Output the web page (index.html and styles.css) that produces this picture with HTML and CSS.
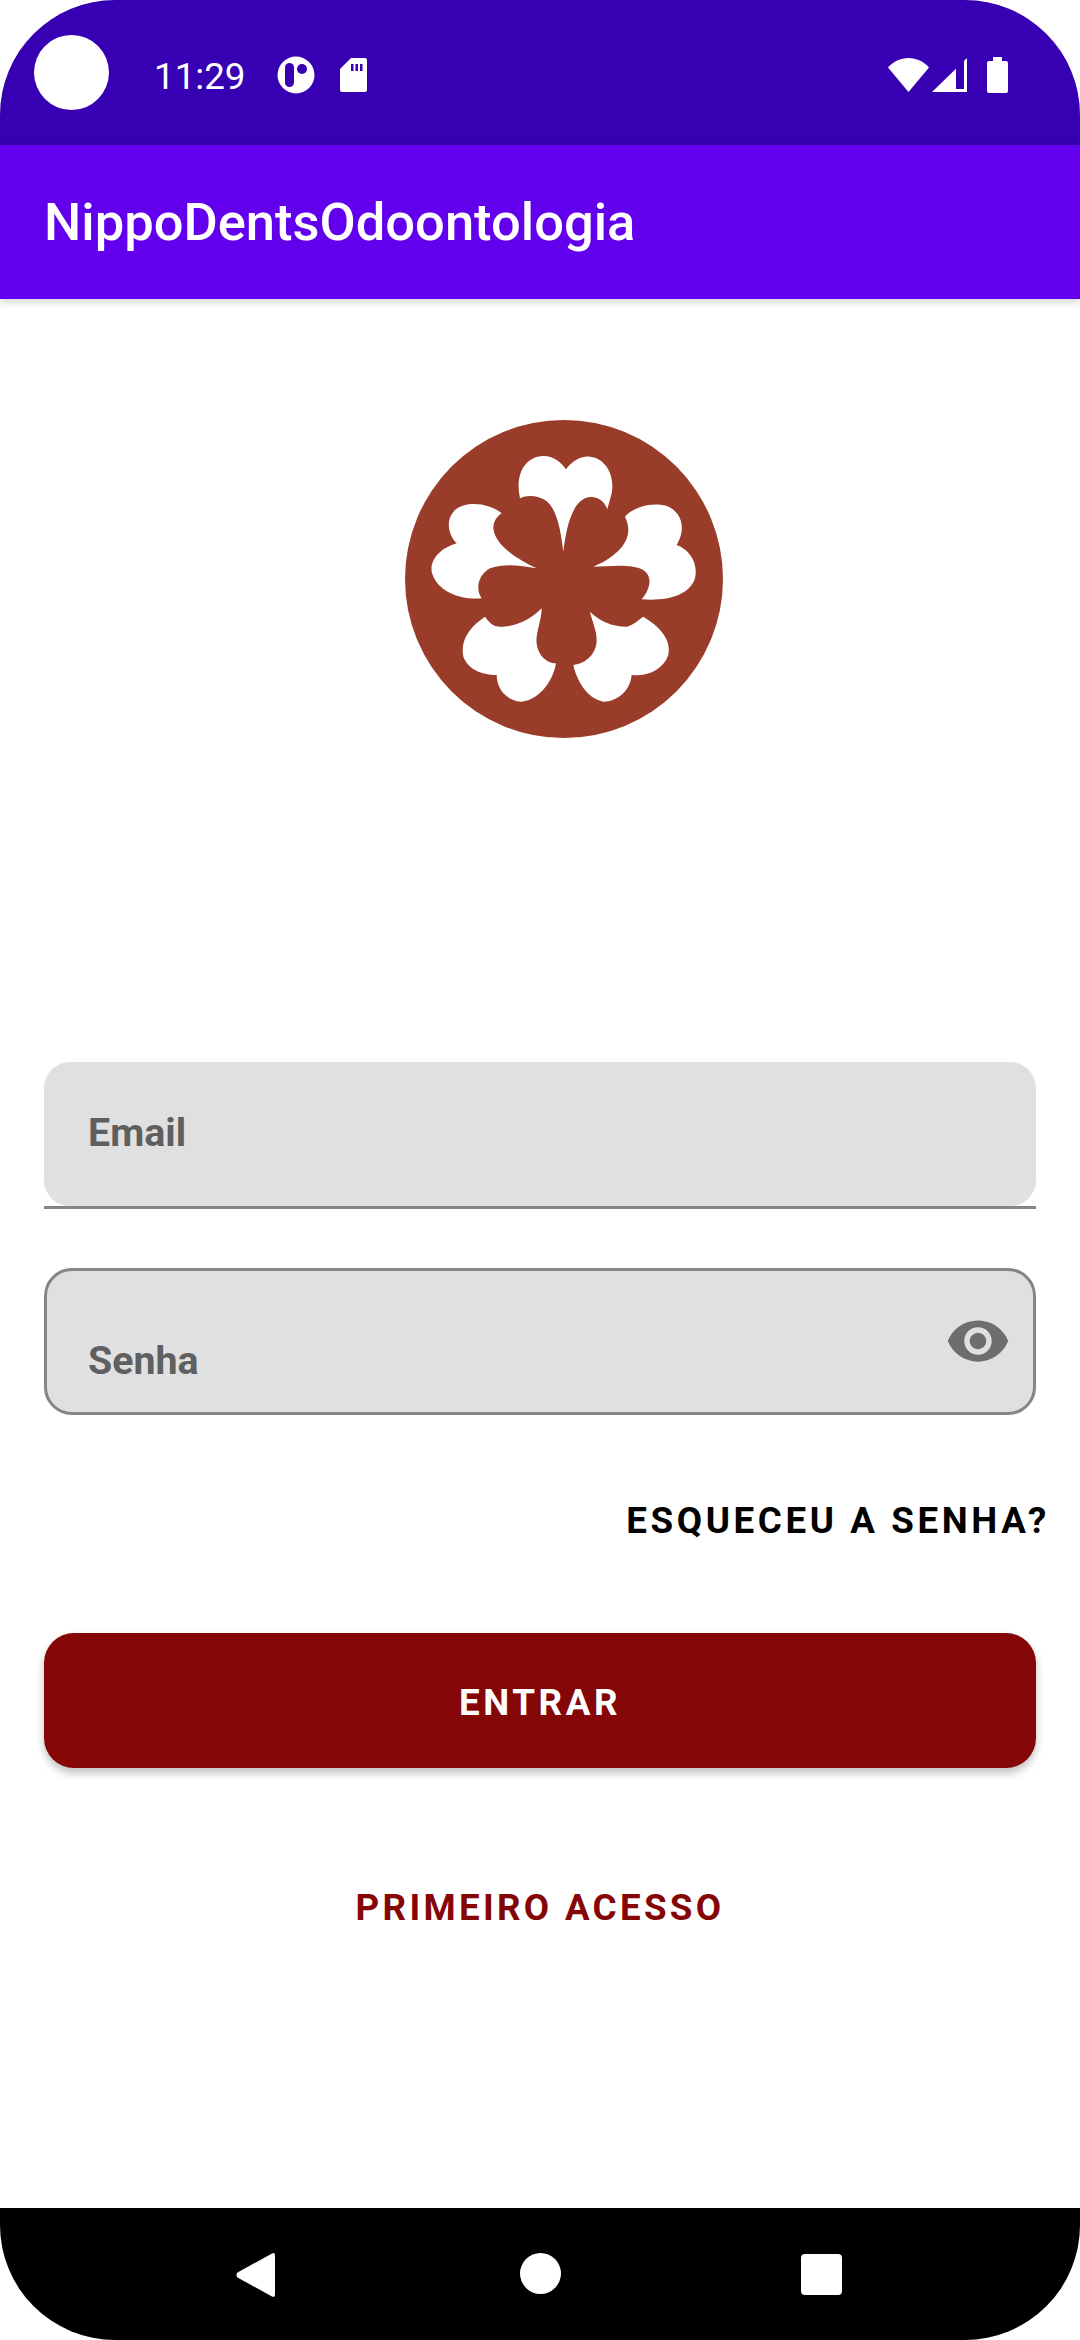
FILE: index.html
```html
<!DOCTYPE html>
<html lang="pt">
<head>
  <meta charset="UTF-8">
  <title>NippoDentsOdoontologia</title>
  <link rel="stylesheet" href="styles.css">
</head>
<body>
<div class="screen">

  <div class="status-bar">
    <div class="camera"></div>
    <span class="time">11:29</span>
    <svg class="ic-data" width="38" height="38" viewBox="0 0 38 38">
      <circle cx="19" cy="19" r="18.5" fill="#fff"/>
      <rect x="8" y="7" width="9" height="24" rx="4.5" fill="#3700b3"/>
      <circle cx="25" cy="13" r="5" fill="#3700b3"/>
    </svg>
    <svg class="ic-sd" width="27" height="34" viewBox="0 0 27 34">
      <path d="M11 0H25a2 2 0 0 1 2 2V32a2 2 0 0 1-2 2H2a2 2 0 0 1-2-2V11Z" fill="#fff"/>
      <path d="M11 6h2.500v7H11ZM15.500 6H18v7h-2.500ZM20 6h2.500v7H20Z" fill="#3700b3"/>
    </svg>
    <div class="status-right">
      <svg width="41" height="34" viewBox="0 0 41 34">
        <path d="M0 9.500C5.500 3.500 12.500 0 20.500 0S35.500 3.500 41 9.500L20.500 34Z" fill="#fff"/>
      </svg>
      <svg class="ic-signal" width="35" height="34" viewBox="0 0 35 34">
        <path d="M35 0V34H0Z" fill="#fff"/>
        <path d="M24 9.500 32 2V31H24Z" fill="#3700b3"/>
        <path d="M26.500 11 29.500 8V28.500H26.500Z" fill="#3700b3"/>
        <path d="M32 4V31H24V12.500L26 11V29H30V6Z" fill="#3700b3"/>
      </svg>
      <svg class="ic-battery" width="21" height="36" viewBox="0 0 21 36">
        <path d="M6 0H15V4H19a2 2 0 0 1 2 2V34a2 2 0 0 1-2 2H2a2 2 0 0 1-2-2V6a2 2 0 0 1 2-2H6Z" fill="#fff"/>
      </svg>
    </div>
  </div>

  <div class="app-bar">NippoDentsOdoontologia</div>

  <div class="content">
    <svg class="logo" width="350" height="350" viewBox="0 0 1050 1050">
      <circle cx="552" cy="537" r="477" fill="#993d2a"/>
      <g fill="#fff">
        <path d="M420 295C405 230 430 170 490 168C525 168 545 190 558 208C575 185 600 168 630 170C680 175 705 230 695 280L682 328C670 295 640 285 615 295C580 310 560 370 550 455C540 370 525 320 495 300C470 285 440 285 420 295Z"/>
        <path d="M735 350C760 320 820 305 860 318C905 335 920 385 890 435C930 450 955 490 945 535C930 585 860 605 785 598C810 570 820 530 790 510C750 490 690 500 640 500C690 480 745 440 745 390C745 375 740 360 735 350Z"/>
        <path d="M365 340C330 310 260 300 225 330C195 360 205 405 230 430C180 445 150 480 155 515C170 575 240 600 305 595C285 565 295 525 330 505C370 490 420 495 470 505C420 480 345 440 340 385C340 365 350 350 365 340Z"/>
        <path d="M315 650C270 680 240 720 250 770C265 810 310 825 350 825C350 870 385 905 425 905C480 900 520 840 528 790C490 790 465 750 470 710C475 680 485 650 485 625C450 660 410 680 360 680C340 680 325 665 315 650Z"/>
        <path d="M630 635C660 665 700 680 740 680C760 675 775 660 790 650C840 680 875 720 865 765C850 810 800 830 755 825C750 875 710 905 670 905C620 895 590 840 580 795C620 790 650 760 650 720C650 690 635 660 630 635Z"/>
      </g>
    </svg>

    <div class="field field-email">Email</div>

    <div class="field field-senha">
      <span class="senha-label">Senha</span>
      <svg class="eye" width="66" height="66" viewBox="0 0 24 24">
        <path d="M12 4.500C7 4.500 2.730 7.610 1 12c1.730 4.390 6 7.500 11 7.500s9.270-3.110 11-7.500c-1.730-4.390-6-7.500-11-7.500zM12 17c-2.760 0-5-2.240-5-5s2.240-5 5-5 5 2.240 5 5-2.240 5-5 5zm0-8c-1.660 0-3 1.340-3 3s1.340 3 3 3 3-1.340 3-3-1.340-3-3-3z" fill="#6e6e6e"/>
      </svg>
    </div>

    <div class="forgot">ESQUECEU A SENHA?</div>

    <div class="btn-entrar">ENTRAR</div>

    <div class="first-access">PRIMEIRO ACESSO</div>
  </div>

  <div class="nav-bar">
    <svg class="nav-back" width="39" height="46" viewBox="0 0 39 46">
      <path d="M36 1.500Q39 0 39 3.500V42.500Q39 46 36 44.500L1.500 25.500Q-.5 23 1.500 20.500Z" fill="#fff"/>
    </svg>
    <svg class="nav-home" width="41" height="41" viewBox="0 0 41 41">
      <circle cx="20.500" cy="20.500" r="20.500" fill="#fff"/>
    </svg>
    <div class="nav-recent"></div>
  </div>

</div>
</body>
</html>
```

FILE: styles.css
```css
* { box-sizing: border-box; }

body {
  margin: 0;
  background: #fff;
  font-family: Roboto, sans-serif;
}

.screen {
  width: 1080px;
  height: 2340px;
  display: flex;
  flex-direction: column;
  overflow: hidden;
}

.status-bar {
  height: 145px;
  background: #3700b3;
  border-radius: 115px 115px 0 0;
  display: flex;
  align-items: center;
  padding: 0 72px 0 34px;
  color: #fff;
}
.camera {
  width: 75px;
  height: 75px;
  border-radius: 50%;
  background: #fff;
}
.time {
  margin-left: 45px;
  font-size: 36.750px;
  line-height: 43px;
  margin-top: 8px;
}
.ic-data { margin-left: 31px; margin-top: 5px; }
.ic-sd { margin-left: 25px; margin-top: 5px; }
.status-right {
  margin-left: auto;
  display: flex;
  align-items: flex-start;
  margin-top: 5px;
}
.ic-signal { margin-left: 3px; }
.ic-battery { margin-left: 20px; margin-top: -1px; }

.app-bar {
  height: 154px;
  background: #6200ee;
  color: #fff;
  font-size: 52.500px;
  font-weight: 500;
  line-height: 154px;
  padding-left: 44px;
  box-shadow: 0 3px 8px rgba(0,0,0,.18);
  position: relative;
}

.content {
  flex: 1;
  padding: 0 44px;
  display: flex;
  flex-direction: column;
}
.logo {
  margin: 101px 0 0 336px;
  flex: none;
  filter: blur(.7px);
}

.field {
  width: 992px;
  background: #e0e0e0;
  color: #5f5f5f;
  font-size: 39.375px;
  font-weight: 700;
}
.field-email {
  margin-top: 312px;
  height: 144px;
  border-radius: 26px 26px 0 0;
  border-bottom-left-radius: 26px;
  border-bottom-right-radius: 26px;
  padding: 48px 0 0 44px;
  line-height: 46px;
  position: relative;
}
.field-email::after {
  content: "";
  position: absolute;
  left: 0;
  right: 0;
  bottom: -3px;
  height: 3px;
  background: #858585;
}
.field-senha {
  margin-top: 62px;
  height: 147px;
  border: 3px solid #858585;
  border-radius: 28px;
  padding: 0 22px 0 41px;
  display: flex;
  justify-content: space-between;
}
.senha-label {
  margin-top: 67px;
  line-height: 46px;
}
.eye { margin-top: 37px; }

.forgot {
  margin-top: 84px;
  margin-right: -14px;
  text-align: right;
  color: #000;
  font-size: 36.750px;
  font-weight: 700;
  letter-spacing: 3.600px;
  line-height: 44px;
}

.btn-entrar {
  margin-top: 90px;
  height: 135px;
  flex: none;
  background: #850606;
  border-radius: 30px;
  box-shadow: 0 5px 8px rgba(0,0,0,.25);
  color: #fff;
  font-size: 36.750px;
  font-weight: 700;
  letter-spacing: 3.600px;
  line-height: 139px;
  text-align: center;
}

.first-access {
  margin-top: 118px;
  text-align: center;
  color: #850606;
  font-size: 36.750px;
  font-weight: 700;
  letter-spacing: 3.300px;
  line-height: 44px;
}

.nav-bar {
  height: 132px;
  background: #000;
  border-radius: 0 0 115px 115px;
  display: flex;
  align-items: flex-start;
  padding: 44px 0 0 236px;
}
.nav-home { margin-left: 245px; margin-top: 1px; }
.nav-recent {
  width: 41px;
  height: 41px;
  margin-left: 240px;
  margin-top: 2px;
  background: #fff;
  border-radius: 4px;
}
```
